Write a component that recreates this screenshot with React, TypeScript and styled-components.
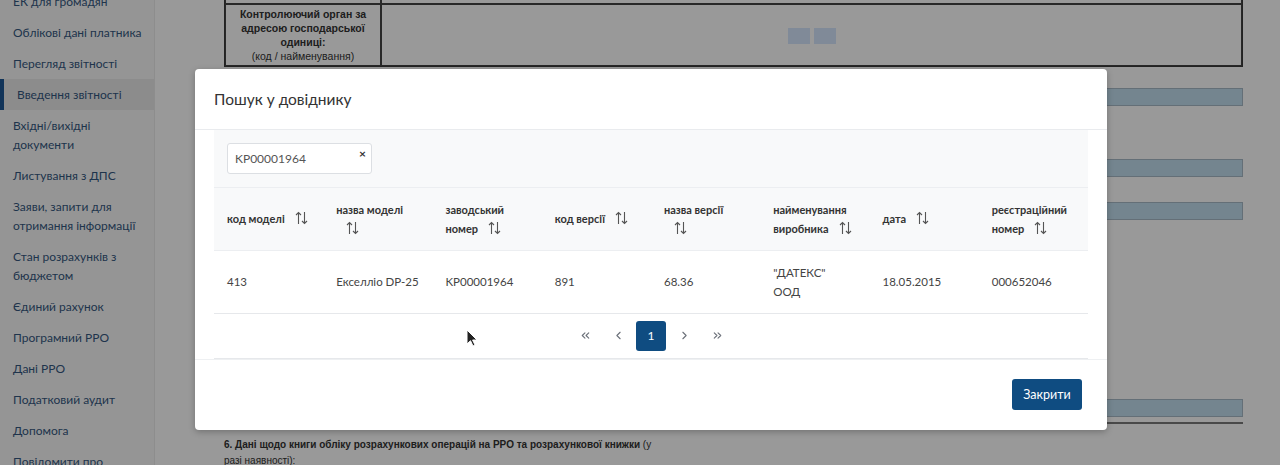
import React from "react";
import styled, { createGlobalStyle } from "styled-components";
import { ChevronLeft, ChevronRight, ChevronsLeft, ChevronsRight } from "lucide-react";

const GlobalStyle = createGlobalStyle`
  html, body {
    margin: 0;
    padding: 0;
  }
  body {
    font-family: Lato, "Noto Sans", sans-serif;
    overflow: hidden;
  }
`;

// page under the dialog
const Page = styled.div`
  position: relative;
  display: flex;
  width: 1280px;
  height: 465px;
  overflow: hidden;
  background: #ffffff;
`;

const Sidebar = styled.aside`
  width: 154px;
  flex-shrink: 0;
  background: #f9f9f9;
  border-right: 1px solid #ebebeb;
`;

const NavList = styled.ul`
  list-style: none;
  margin: -14px 0 0;
  padding: 0;
`;

const NavItem = styled.li<{ $active?: boolean }>`
  padding: 6px 4px 6px ${(p) => (p.$active ? "17px" : "13px")};
  font-size: 12px;
  line-height: 19px;
  color: #35577f;
  background: ${(p) => (p.$active ? "#eaeaea" : "transparent")};
  box-shadow: ${(p) => (p.$active ? "inset 4px 0 0 #1d5894" : "none")};
`;

const Main = styled.main`
  flex: 1;
  padding: 0 37px 0 69px;
  font-family: "Liberation Sans", Arial, sans-serif;
  color: #333;
`;

const FormTable = styled.table`
  width: 100%;
  margin-top: -17px;
  border-collapse: separate;
  border-spacing: 0;
  border: 1px solid #3a3a3a;
`;

const LabelCell = styled.td`
  width: 146px;
  border: 1px solid #444;
  padding: 2px 4px;
  text-align: center;
  font-size: 10.5px;
  line-height: 14px;
  vertical-align: middle;
`;

const ValueCell = styled.td`
  border: 1px solid #444;
  text-align: center;
  vertical-align: middle;
`;

const MiniButtons = styled.div`
  display: inline-flex;
  gap: 4px;
  vertical-align: middle;
`;

const MiniButton = styled.span`
  width: 22px;
  height: 16px;
  background: #d5e6fd;
`;

const FieldRow = styled.div<{ $top: number }>`
  display: flex;
  justify-content: flex-end;
  margin-top: ${(p) => p.$top}px;
`;

const FieldBar = styled.div`
  width: 600px;
  height: 16px;
  background: #c2deef;
  border: 1px solid #a7b9c6;
`;

const Rule = styled.div`
  width: 600px;
  height: 2px;
  background: #7a7a7a;
`;

const Note = styled.p`
  max-width: 436px;
  margin: 13px 0 0;
  font-size: 10px;
  line-height: 16px;
  color: #333;
`;

// dialog
const Backdrop = styled.div`
  position: absolute;
  inset: 0;
  background: rgba(0, 0, 0, 0.4);
`;

const Dialog = styled.div`
  position: absolute;
  left: 195px;
  top: 69px;
  width: 912px;
  background: #fff;
  border-radius: 4px;
  box-shadow: 0 2px 6px rgba(0, 0, 0, 0.25);
  display: flex;
  flex-direction: column;
  font-family: Lato, "Noto Sans", sans-serif;
`;

const DialogHeader = styled.div`
  height: 61px;
  box-sizing: border-box;
  padding: 0 19px;
  display: flex;
  align-items: center;
  border-bottom: 1px solid #e9ebee;
  font-size: 15.5px;
  color: #333;
`;

const DialogBody = styled.div`
  padding: 0 19px;
`;

const FilterBar = styled.div`
  height: 58px;
  box-sizing: border-box;
  padding: 13px;
  background: #f8f9fa;
  border-bottom: 1px solid #eceef1;
`;

const SearchBox = styled.div`
  position: relative;
  width: 145px;
  height: 31px;
  box-sizing: border-box;
  padding-left: 7px;
  display: flex;
  align-items: center;
  background: #fff;
  border: 1px solid #dcdfe3;
  border-radius: 3px;
  font-size: 12px;
  color: #555;
`;

const ClearMark = styled.span`
  position: absolute;
  top: 2px;
  right: 5px;
  font-size: 12px;
  font-weight: 700;
  color: #333;
`;

const Grid = styled.table`
  width: 100%;
  table-layout: fixed;
  border-collapse: collapse;
`;

const HeadCell = styled.th`
  height: 62px;
  box-sizing: border-box;
  padding: 0 15px 0 13px;
  background: #f8f9fa;
  border-bottom: 1px solid #eceef1;
  text-align: left;
  vertical-align: middle;
  font-size: 11px;
  font-weight: 700;
  line-height: 19px;
  color: #333;
`;

const BodyCell = styled.td<{ $wrap?: boolean }>`
  height: 63px;
  box-sizing: border-box;
  padding: 0 22px 0 13px;
  border-bottom: 1px solid #e6e8eb;
  vertical-align: middle;
  white-space: ${(p) => (p.$wrap ? "normal" : "nowrap")};
  font-size: 11.5px;
  line-height: 19px;
  color: #444;
`;

const SortIcon = styled.svg`
  display: inline-block;
  vertical-align: -2px;
  margin-left: 10px;
`;

const Pager = styled.div`
  height: 45px;
  box-sizing: border-box;
  display: flex;
  justify-content: center;
  align-items: center;
  gap: 3px;
  border-bottom: 1px solid #e6e8eb;
`;

const PageButton = styled.span<{ $active?: boolean }>`
  width: 30px;
  height: 30px;
  display: flex;
  align-items: center;
  justify-content: center;
  border-radius: 3px;
  font-size: 12px;
  color: ${(p) => (p.$active ? "#fff" : "#6b7079")};
  background: ${(p) => (p.$active ? "#0f4c81" : "transparent")};
`;

const DialogFooter = styled.div`
  height: 71px;
  box-sizing: border-box;
  padding: 19px 25px;
  display: flex;
  justify-content: flex-end;
  border-top: 1px solid #eef0f2;
`;

const CloseButton = styled.button`
  width: 70px;
  height: 31px;
  padding: 0;
  border: none;
  border-radius: 3px;
  background: #0f4c81;
  color: #fff;
  font-family: Lato, "Noto Sans", sans-serif;
  font-size: 12.5px;
`;

const Cursor = styled.svg`
  position: absolute;
  left: 466px;
  top: 329px;
`;

const navItems = [
  "ЕК для громадян",
  "Облікові дані платника",
  "Перегляд звітності",
  "Введення звітності",
  "Вхідні/вихідні документи",
  "Листування з ДПС",
  "Заяви, запити для отримання інформації",
  "Стан розрахунків з бюджетом",
  "Єдиний рахунок",
  "Програмний РРО",
  "Дані РРО",
  "Податковий аудит",
  "Допомога",
  "Повідомити про",
];

const columns = [
  "код моделі",
  "назва моделі",
  "заводський номер",
  "код версії",
  "назва версії",
  "найменування виробника",
  "дата",
  "реєстраційний номер",
];

const row = ["413", "Екселліо DP-25", "KP00001964", "891", "68.36", "\"ДАТЕКС\" ООД", "18.05.2015", "000652046"];

const Sort = () => (
  <SortIcon width="13" height="14" viewBox="0 0 13 14" fill="none" stroke="#555" strokeWidth="1.1">
    <path d="M3.5 13V1.5M1 4l2.5-2.5L6 4" />
    <path d="M9.5 1v11.5M7 10l2.5 2.5L12 10" />
  </SortIcon>
);

const App = () => {
  return (
    <>
      <GlobalStyle />
      <Page>
        <Sidebar>
          <NavList>
            {navItems.map((item) => (
              <NavItem key={item} $active={item === "Введення звітності"}>
                {item}
              </NavItem>
            ))}
          </NavList>
        </Sidebar>

        <Main>
          <FormTable>
            <tbody>
              <tr>
                <LabelCell>(підпорядкування)</LabelCell>
                <ValueCell />
              </tr>
              <tr>
                <LabelCell>
                  <b>Контролюючий орган за адресою господарської одиниці:</b>
                  <br />
                  (код / найменування)
                </LabelCell>
                <ValueCell>
                  <MiniButtons>
                    <MiniButton />
                    <MiniButton />
                  </MiniButtons>
                </ValueCell>
              </tr>
            </tbody>
          </FormTable>
          <FieldRow $top={21}>
            <FieldBar />
          </FieldRow>
          <FieldRow $top={53}>
            <FieldBar />
          </FieldRow>
          <FieldRow $top={25}>
            <FieldBar />
          </FieldRow>
          <FieldRow $top={179}>
            <FieldBar />
          </FieldRow>
          <FieldRow $top={5}>
            <Rule />
          </FieldRow>
          <Note>
            <b>6. Дані щодо книги обліку розрахункових операцій на РРО та розрахункової книжки</b> (у
            разі наявності):
          </Note>
        </Main>

        <Backdrop />

        <Dialog>
          <DialogHeader>Пошук у довіднику</DialogHeader>
          <DialogBody>
            <FilterBar>
              <SearchBox>
                KP00001964
                <ClearMark>×</ClearMark>
              </SearchBox>
            </FilterBar>
            <Grid>
              <thead>
                <tr>
                  {columns.map((c) => (
                    <HeadCell key={c}>
                      {c}
                      <Sort />
                    </HeadCell>
                  ))}
                </tr>
              </thead>
              <tbody>
                <tr>
                  {row.map((v, i) => (
                    <BodyCell key={i} $wrap={i === 5}>
                      {v}
                    </BodyCell>
                  ))}
                </tr>
              </tbody>
            </Grid>
            <Pager>
              <PageButton>
                <ChevronsLeft size={13} strokeWidth={2} />
              </PageButton>
              <PageButton>
                <ChevronLeft size={13} strokeWidth={2} />
              </PageButton>
              <PageButton $active>1</PageButton>
              <PageButton>
                <ChevronRight size={13} strokeWidth={2} />
              </PageButton>
              <PageButton>
                <ChevronsRight size={13} strokeWidth={2} />
              </PageButton>
            </Pager>
          </DialogBody>
          <DialogFooter>
            <CloseButton>Закрити</CloseButton>
          </DialogFooter>
        </Dialog>

        <Cursor width="12" height="18" viewBox="0 0 12 18">
          <path d="M1 1v14l3.5-3.3 2.5 5.3 2-1-2.4-5H11z" fill="#222" stroke="#fff" strokeWidth="1" />
        </Cursor>
      </Page>
    </>
  );
};

export default App;
